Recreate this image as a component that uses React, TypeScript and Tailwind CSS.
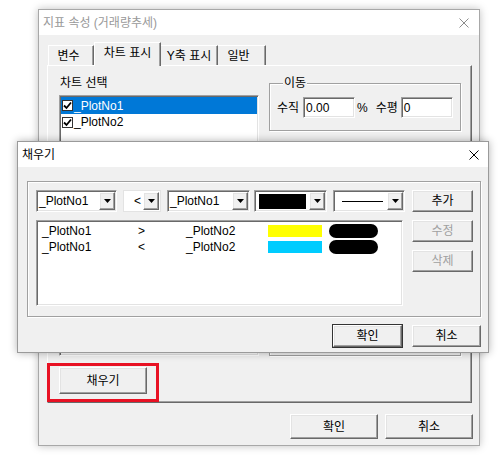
import React from "react";

const raised =
  "border border-t-white border-l-white border-r-[#696969] border-b-[#696969] shadow-[inset_-1px_-1px_0_#a0a0a0,inset_1px_1px_0_#e3e3e3] bg-[#f0f0f0]";
const sunken =
  "border border-t-[#a0a0a0] border-l-[#a0a0a0] border-r-white border-b-white shadow-[inset_1px_1px_0_#696969,inset_-1px_-1px_0_#e3e3e3] bg-white";
const etched = "border border-[#a0a0a0] shadow-[inset_1px_1px_0_#ffffff,1px_1px_0_#ffffff]";

const CloseX = ({ color }: { color: string }) => (
  <svg width="10" height="10" viewBox="0 0 10 10">
    <path d="M0.5 0.5 L9.5 9.5 M9.5 0.5 L0.5 9.5" stroke={color} strokeWidth="1" />
  </svg>
);

const Arrow = () => (
  <svg width="7" height="4" viewBox="0 0 7 4">
    <polygon points="0,0 7,0 3.5,4" fill="#000" />
  </svg>
);

const Check = () => (
  <span className="w-[11px] h-[11px] bg-white border border-[#333] flex items-center justify-center">
    <svg width="9" height="9" viewBox="0 0 9 9">
      <path d="M1 4.5 L3.5 7 L8 1.5" stroke="#000" strokeWidth="1.8" fill="none" />
    </svg>
  </span>
);

function Combo({ className, children }: { className: string; children?: React.ReactNode }) {
  return (
    <div className={`h-[22px] flex p-[1px] ${className}`}>
      <div className="flex-1 flex items-center pl-[1px] overflow-hidden whitespace-nowrap">{children}</div>
      <div className={`w-[16px] flex items-center justify-center ${raised}`}>
        <Arrow />
      </div>
    </div>
  );
}

function Btn({ className, children }: { className: string; children: React.ReactNode }) {
  return <div className={`flex items-center justify-center ${raised} ${className}`}>{children}</div>;
}

export default function App() {
  return (
    <div className="relative w-[501px] h-[456px] overflow-hidden bg-white text-[12px] text-black font-['Liberation_Sans','Noto_Sans_CJK_KR',sans-serif]">
      {/* back dialog: 지표 속성 */}
      <div className="ml-[38px] mt-[9px] w-[442px] h-[437px] border border-[#a8a8a8] bg-[#f0f0f0] flex flex-col shadow-[0_0_8px_rgba(0,0,0,0.25)]">
        <div className="h-[25px] bg-white flex items-center justify-between pl-[4px] pr-[10px] text-[#999999] text-[12px]">
          <span>지표 속성 (거래량추세)</span>
          <CloseX color="#8c8c8c" />
        </div>
        <div className="flex-1 flex flex-col pt-[7px] pl-[8px] pr-[7px]">
          {/* tabs */}
          <div className="h-[23px] flex items-end pl-[1px]">
            <div className="w-[46px] h-[20px] border-t border-l border-t-white border-l-white border-r border-r-[#696969] shadow-[inset_-1px_0_0_#a0a0a0] flex items-center justify-center pr-[5px]">
              변수
            </div>
            <div className="relative z-10 -mb-px w-[67px] h-[24px] bg-[#f0f0f0] border-t border-l border-t-white border-l-white border-r border-r-[#696969] shadow-[inset_-1px_0_0_#a0a0a0] flex items-center justify-center pb-[3px]">
              차트 표시
            </div>
            <div className="w-[57px] h-[20px] border-t border-t-white border-r border-r-[#696969] shadow-[inset_-1px_0_0_#a0a0a0] flex items-center justify-center">
              Y축 표시
            </div>
            <div className="w-[48px] h-[20px] border-t border-t-white border-r border-r-[#696969] shadow-[inset_-1px_0_0_#a0a0a0] flex items-center justify-center pr-[6px]">
              일반
            </div>
          </div>
          {/* tab panel */}
          <div className="h-[338px] border border-t-white border-l-white border-r-[#696969] border-b-[#696969] shadow-[inset_-1px_-1px_0_#a0a0a0] pt-[10px] pl-[11px]">
            <div className="flex">
              <div className="w-[200px] flex flex-col">
                <div className="h-[14px] leading-[14px] pl-[1px] mb-[5px]">차트 선택</div>
                <div className={`h-[261px] p-[1px] ${sunken}`}>
                  <div className="h-[17px] bg-[#0078d7] text-white flex items-center gap-[1px] pl-[1px]">
                    <Check />
                    <span>_PlotNo1</span>
                  </div>
                  <div className="h-[16px] flex items-center gap-[1px] pl-[1px]">
                    <Check />
                    <span>_PlotNo2</span>
                  </div>
                </div>
              </div>
              <div className="w-[192px] ml-[10px] flex flex-col">
                <div className={`relative mt-[7px] h-[48px] pt-[13px] pl-[7px] ${etched}`}>
                  <span className="absolute -top-[8px] left-[13px] px-[1px] bg-[#f0f0f0] leading-[14px]">이동</span>
                  <div className="flex items-center h-[21px]">
                    <span>수직</span>
                    <div className={`ml-[4px] w-[52px] h-[21px] flex items-center pl-[2px] ${sunken}`}>0.00</div>
                    <span className="ml-[2px]">%</span>
                    <span className="ml-[8px]">수평</span>
                    <div className={`ml-[3px] w-[52px] h-[21px] flex items-center pl-[2px] ${sunken}`}>0</div>
                  </div>
                </div>
                <div className={`mt-[13px] h-[212px] ${etched}`} />
              </div>
            </div>
            <Btn className="mt-[11px] w-[88px] h-[27px]">채우기</Btn>
          </div>
          {/* back dialog buttons */}
          <div className="mt-[11px] -mr-[1px] flex justify-end gap-[7px]">
            <Btn className="w-[88px] h-[25px]">확인</Btn>
            <Btn className="w-[88px] h-[25px]">취소</Btn>
          </div>
        </div>
      </div>

      {/* annotation */}
      <div className="absolute left-[47px] top-[363px] w-[112px] h-[39px] border-[3px] border-[#e81123]" />

      {/* front dialog: 채우기 */}
      <div className="absolute left-[17px] top-[141px] w-[472px] h-[212px] border border-[#9a9a9a] bg-[#f0f0f0] flex flex-col shadow-[0_0_8px_rgba(0,0,0,0.3)]">
        <div className="h-[25px] bg-white flex items-center justify-between pl-[4px] pr-[9px]">
          <span>채우기</span>
          <CloseX color="#000" />
        </div>
        <div className="flex-1 pt-[14px] pl-[9px]">
          <div className={`w-[454px] h-[136px] pt-[8px] pl-[8px] ${etched}`}>
            <div className="flex items-center h-[22px]">
              <Combo className={`w-[81px] ${sunken}`}>_PlotNo1</Combo>
              <Combo className="ml-[6px] w-[38px] border border-[#e3e3e3] bg-white">
                <span className="pl-[8px]">&lt;</span>
              </Combo>
              <Combo className={`ml-[6px] w-[83px] ${sunken}`}>_PlotNo1</Combo>
              <Combo className={`ml-[4px] w-[73px] ${sunken}`}>
                <span className="ml-[2px] w-[47px] h-[15px] bg-black" />
              </Combo>
              <Combo className={`ml-[6px] w-[72px] ${sunken}`}>
                <span className="ml-[6px] w-[41px] h-[1px] bg-black" />
              </Combo>
              <Btn className="ml-[7px] w-[61px] h-[22px]">추가</Btn>
            </div>
            <div className="mt-[8px] flex">
              <div className={`w-[367px] h-[86px] pt-[2px] pl-[5px] ${sunken}`}>
                <div className="flex items-center h-[16px]">
                  <span className="w-[96px]">_PlotNo1</span>
                  <span className="w-[48px]">&gt;</span>
                  <span className="w-[82px]">_PlotNo2</span>
                  <span className="w-[54px] h-[12px] bg-[#ffff00]" />
                  <span className="ml-[7px] w-[49px] h-[14px] rounded-full bg-black" />
                </div>
                <div className="flex items-center h-[16px]">
                  <span className="w-[96px]">_PlotNo1</span>
                  <span className="w-[48px]">&lt;</span>
                  <span className="w-[82px]">_PlotNo2</span>
                  <span className="w-[54px] h-[12px] bg-[#00ccff]" />
                  <span className="ml-[7px] w-[49px] h-[14px] rounded-full bg-black" />
                </div>
              </div>
              <div className="ml-[9px] flex flex-col gap-[8px]">
                <Btn className="w-[61px] h-[22px] text-[#a0a0a0]">수정</Btn>
                <Btn className="w-[61px] h-[22px] text-[#a0a0a0]">삭제</Btn>
              </div>
            </div>
          </div>
          <div className="w-[454px] mt-[8px] flex justify-end gap-[10px]">
            <Btn className="w-[69px] h-[22px] outline outline-1 outline-[#333]">확인</Btn>
            <Btn className="w-[69px] h-[22px]">취소</Btn>
          </div>
        </div>
      </div>
    </div>
  );
}
